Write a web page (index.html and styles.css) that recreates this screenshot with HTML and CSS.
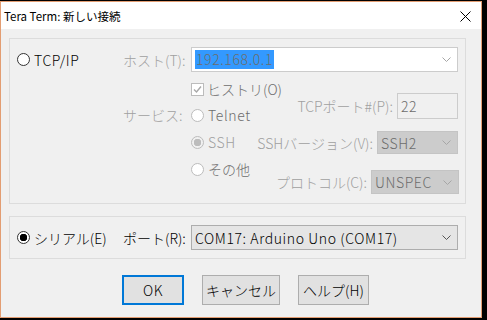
FILE: index.html
```html
<!DOCTYPE html>
<html lang="ja">

<head>
    <meta charset="UTF-8">
    <meta name="viewport" content="width=device-width, initial-scale=1.0">
    <title>Tera Term: 新しい接続</title>
    <link rel="stylesheet" href="styles.css">
</head>

<body>
    <div class="window">
        <div class="titlebar">
            <span class="title">Tera Term: 新しい接続</span>
            <svg class="close" width="11" height="11" viewBox="0 0 11 11">
                <path d="M0.5 0.5 L10.5 10.5 M10.5 0.5 L0.5 10.5" stroke="#000" stroke-width="1" fill="none" />
            </svg>
        </div>

        <div class="content">
            <div class="group tcp">
                <div class="row1">
                    <div class="radiocol">
                        <span class="radio"></span>
                        <span class="lat">TCP/IP</span>
                    </div>
                    <div class="labelcol dim">ホスト(T):</div>
                    <div class="combo host">
                        <span class="sel lat">192.168.0.1</span>
                        <svg class="arrow" width="9" height="5" viewBox="0 0 9 5">
                            <path d="M0.5 0.5 L4.5 4.5 L8.5 0.5" stroke="#a6a6a6" fill="none" />
                        </svg>
                    </div>
                </div>

                <div class="lower">
                    <div class="spacer"></div>
                    <div class="labelcol svc dim">サービス:</div>
                    <div class="midcol">
                        <div class="opt check-row">
                            <span class="checkbox">
                                <svg width="11" height="11" viewBox="0 0 11 11">
                                    <path d="M2 5.5 L4.5 8 L9 2.5" stroke="#a8a8a8" stroke-width="1.4" fill="none" />
                                </svg>
                            </span>
                            <span class="gray">ヒストリ(O)</span>
                        </div>
                        <div class="opt">
                            <span class="radio off"></span>
                            <span class="gray lat">Telnet</span>
                        </div>
                        <div class="opt">
                            <span class="radio off on"></span>
                            <span class="dim lat">SSH</span>
                        </div>
                        <div class="opt">
                            <span class="radio off"></span>
                            <span class="gray">その他</span>
                        </div>
                    </div>
                    <div class="rightcol">
                        <div class="field port-row">
                            <span class="dim">TCPポート#(P):</span>
                            <div class="edit lat">22</div>
                        </div>
                        <div class="field ver-row">
                            <span class="dim">SSHバージョン(V):</span>
                            <div class="combo off ver">
                                <span class="lat">SSH2</span>
                                <svg class="arrow" width="9" height="5" viewBox="0 0 9 5">
                                    <path d="M0.5 0.5 L4.5 4.5 L8.5 0.5" stroke="#a6a6a6" fill="none" />
                                </svg>
                            </div>
                        </div>
                        <div class="field proto-row">
                            <span class="dim">プロトコル(C):</span>
                            <div class="combo off proto">
                                <span class="lat">UNSPEC</span>
                                <svg class="arrow" width="9" height="5" viewBox="0 0 9 5">
                                    <path d="M0.5 0.5 L4.5 4.5 L8.5 0.5" stroke="#a6a6a6" fill="none" />
                                </svg>
                            </div>
                        </div>
                    </div>
                </div>
            </div>

            <div class="group serial">
                <div class="radiocol">
                    <span class="radio checked"></span>
                    <span>シリアル(E)</span>
                </div>
                <div class="labelcol">ポート(R):</div>
                <div class="combo com">
                    <span class="lat">COM17: Arduino Uno (COM17)</span>
                    <svg class="arrow" width="9" height="5" viewBox="0 0 9 5">
                        <path d="M0.5 0.5 L4.5 4.5 L8.5 0.5" stroke="#555" fill="none" />
                    </svg>
                </div>
            </div>

            <div class="buttons">
                <button class="btn ok">OK</button>
                <button class="btn cancel">キャンセル</button>
                <button class="btn help">ヘルプ(H)</button>
            </div>
        </div>
    </div>
</body>
</html>
```

FILE: styles.css
```css
* {
    margin: 0;
    padding: 0;
    box-sizing: border-box;
}
body {
    background: #000;
    font-family: "Noto Sans CJK JP", sans-serif;
    font-size: 14px;
    font-weight: 300;
    color: #000;
}
.lat {
    letter-spacing: 0.6px;
}
.window {
    margin-top: 1px;
    width: 482px;
    height: 317px;
    border: 1px solid #e39d72;
    background: #f0f0f0;
}
.titlebar {
    height: 27px;
    background: #fff;
    display: flex;
    align-items: center;
    justify-content: space-between;
    padding: 0 10px 0 3px;
}
.title {
    font-size: 11.5px;
    font-weight: 400;
    margin-top: 1px;
}
.close {
    margin-top: 1px;
}
.content {
    padding: 9px 0 0 8px;
}
.group {
    width: 457px;
    border: 1px solid #dcdcdc;
}
.tcp {
    height: 166px;
    padding: 8px 7px 0 7px;
}
.row1 {
    display: flex;
    align-items: center;
    height: 25px;
}
.radiocol {
    width: 106px;
    display: flex;
    align-items: center;
    white-space: nowrap;
}
.labelcol {
    width: 68px;
    white-space: nowrap;
}
.dim {
    color: #a0a0a0;
}
.gray {
    color: #6d6d6d;
}
.radio {
    width: 13px;
    height: 13px;
    border: 1px solid #333;
    border-radius: 50%;
    background: #fff;
    margin-right: 4px;
    flex-shrink: 0;
}
.radio.checked {
    background: radial-gradient(circle, #000 0 3.5px, #fff 4px);
}
.radio.off {
    border-color: #bcbcbc;
}
.radio.on {
    background: radial-gradient(circle, #bcbcbc 0 3.5px, #f0f0f0 4px);
}
.combo {
    display: flex;
    align-items: center;
    justify-content: space-between;
    border: 1px solid #cccccc;
    background: #f0f0f0;
    padding: 0 6px 0 3px;
    white-space: nowrap;
}
.host {
    width: 267px;
    height: 25px;
    background: #fff;
    padding-left: 0;
}
.host .sel {
    background: #3399ff;
    color: #6d6d6d;
    padding: 0 1px 0 1px;
    margin-left: 3px;
    line-height: 19px;
}
.lower {
    display: flex;
}
.spacer {
    width: 106px;
}
.svc {
    margin-top: 33px;
    height: 20px;
    line-height: 20px;
}
.midcol {
    width: 59px;
    padding-top: 7px;
}
.opt {
    display: flex;
    align-items: center;
    height: 20px;
    margin-bottom: 7px;
    white-space: nowrap;
}
.check-row {
    margin-bottom: 6px;
}
.checkbox {
    width: 13px;
    height: 13px;
    border: 1px solid #bcbcbc;
    background: #fff;
    margin-right: 3px;
    display: flex;
}
.rightcol {
    flex: 1;
    display: flex;
    flex-direction: column;
    align-items: flex-end;
    padding-top: 21px;
}
.field {
    display: flex;
    align-items: center;
    white-space: nowrap;
}
.field > span {
    margin-right: 4px;
}
.edit {
    width: 61px;
    height: 26px;
    border: 1px solid #cccccc;
    background: #f0f0f0;
    padding: 2px 0 0 3px;
    color: #6d6d6d;
}
.ver-row {
    margin-top: 12px;
}
.proto-row {
    margin-top: 16px;
    margin-right: -1px;
}
.combo.off {
    background: #cccccc;
    border-color: #c4c4c4;
    color: #6d6d6d;
}
.ver {
    width: 81px;
    height: 23px;
}
.proto {
    width: 88px;
    height: 24px;
}
.serial {
    margin-top: 12px;
    height: 43px;
    display: flex;
    align-items: center;
    padding: 0 7px;
}
.com {
    width: 267px;
    height: 25px;
    background: #e5e5e5;
    border-color: #adadad;
}
.buttons {
    display: flex;
    margin: 16px 0 0 113px;
    gap: 18px;
}
.btn {
    height: 30px;
    background: #e1e1e1;
    border: 1px solid #adadad;
    font-family: "Noto Sans CJK JP", sans-serif;
    font-size: 14px;
    font-weight: 300;
    color: #000;
}
.ok {
    width: 62px;
    border: 2px solid #0078d7;
    letter-spacing: 0.6px;
}
.cancel {
    width: 78px;
}
.help {
    width: 71px;
}
```
